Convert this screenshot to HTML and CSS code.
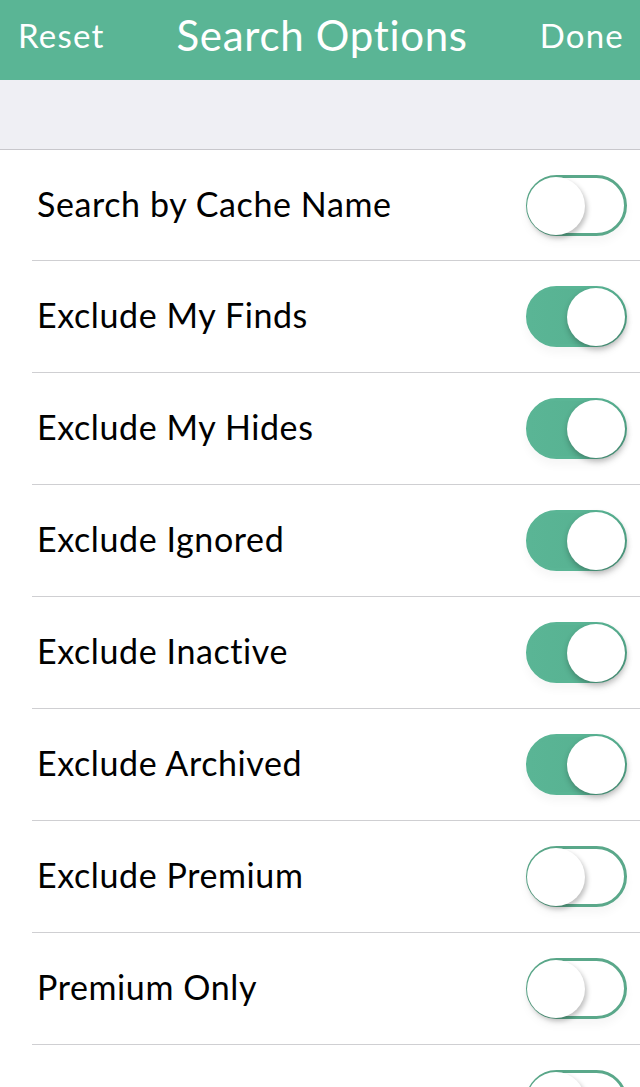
FILE: index.html
```html
<!DOCTYPE html>
<html lang="en">
<head>
<meta charset="utf-8">
<title>Search Options</title>
<link rel="stylesheet" href="styles.css">
</head>
<body>
<header class="navbar">
  <span class="nav-btn">Reset</span>
  <h1 class="nav-title">Search Options</h1>
  <span class="nav-btn">Done</span>
</header>
<div class="band"></div>
<ul class="list">
  <li class="row"><span class="label">Search by Cache Name</span><span class="switch"><span class="knob"></span></span></li>
  <li class="row"><span class="label">Exclude My Finds</span><span class="switch on"><span class="knob"></span></span></li>
  <li class="row"><span class="label">Exclude My Hides</span><span class="switch on"><span class="knob"></span></span></li>
  <li class="row"><span class="label">Exclude Ignored</span><span class="switch on"><span class="knob"></span></span></li>
  <li class="row"><span class="label">Exclude Inactive</span><span class="switch on"><span class="knob"></span></span></li>
  <li class="row"><span class="label">Exclude Archived</span><span class="switch on"><span class="knob"></span></span></li>
  <li class="row"><span class="label">Exclude Premium</span><span class="switch"><span class="knob"></span></span></li>
  <li class="row"><span class="label">Premium Only</span><span class="switch"><span class="knob"></span></span></li>
  <li class="row"><span class="label"></span><span class="switch"><span class="knob"></span></span></li>
</ul>
</body>
</html>
```
FILE: styles.css
```css
* { box-sizing: border-box; }
html, body { margin: 0; padding: 0; }
body {
  width: 640px;
  height: 1087px;
  overflow: hidden;
  background: #ffffff;
  font-family: "Lato", "Open Sans", sans-serif;
  color: #000;
}
.navbar {
  height: 80px;
  background: #5ab595;
  display: flex;
  align-items: center;
  justify-content: space-between;
  padding: 0 16px 10px 18px;
  color: #fff;
}
.nav-btn {
  font-size: 33px;
  font-weight: 400;
  letter-spacing: 1.2px;
}
.nav-title {
  margin: 0;
  font-size: 42px;
  font-weight: 400;
  letter-spacing: 0.7px;
}
.band {
  height: 70px;
  background: #efeff4;
  border-bottom: 1px solid #c8c7cc;
}
.list {
  list-style: none;
  margin: 0;
  padding: 0 0 0 32px;
}
.row {
  height: 112px;
  display: flex;
  align-items: center;
  justify-content: space-between;
  padding: 0 13px 0 5px;
  border-bottom: 1px solid #cfcfd2;
}
.row:first-child {
  height: 111px;
}
.label {
  font-size: 34px;
  letter-spacing: 0.6px;
  margin-top: -4px;
}
.switch {
  width: 101px;
  height: 61px;
  border-radius: 31px;
  border: 3px solid #5aa88a;
  background: #fff;
  position: relative;
  box-shadow: 0 6px 10px rgba(0,0,0,0.04);
}
.switch.on {
  background: linear-gradient(90deg, #5ab595 0%, #56b090 100%);
  border-color: #5ab595;
}
.knob {
  position: absolute;
  top: -1px;
  left: -2px;
  width: 58px;
  height: 58px;
  border-radius: 50%;
  background: #fff;
  box-shadow: 2px 3px 5px rgba(0,0,0,0.25);
}
.switch.on .knob {
  left: auto;
  right: -1px;
  box-shadow: 1px 3px 6px rgba(0,0,0,0.3);
}
```
